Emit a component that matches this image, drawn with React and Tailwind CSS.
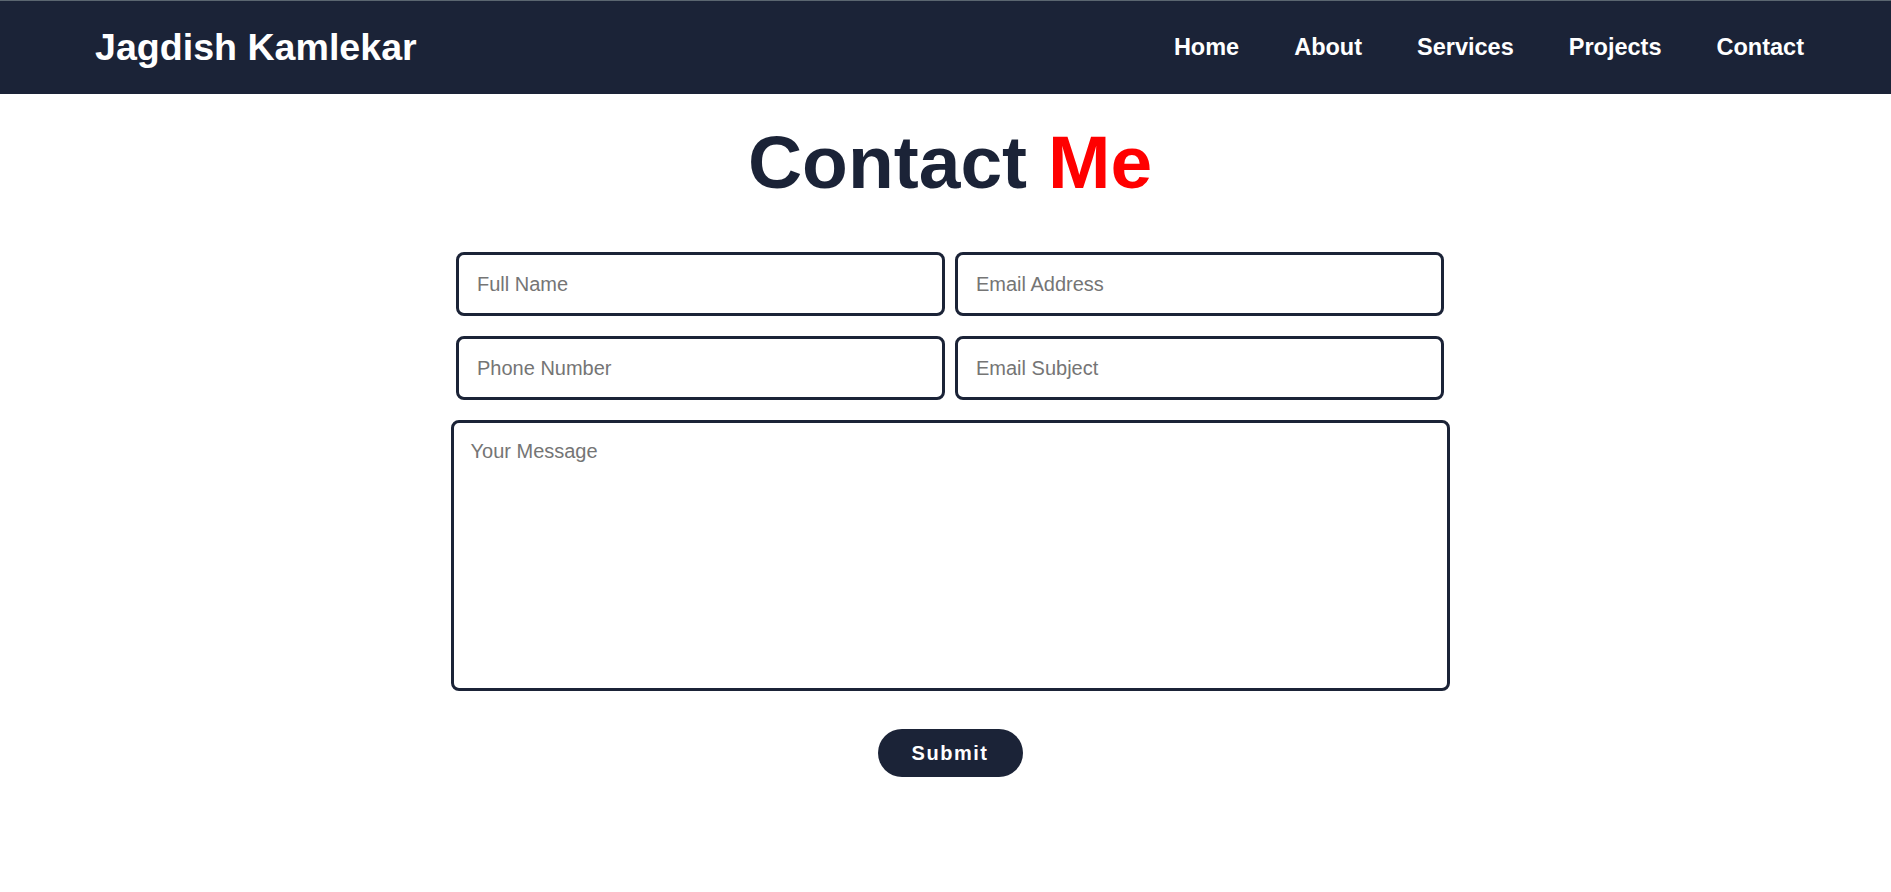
export default function App() {
  const links = ['Home', 'About', 'Services', 'Projects', 'Contact']

  return (
    <div className="min-h-screen bg-white font-['Liberation_Sans',Arial,sans-serif]">
      {/* Navbar */}
      <header className="h-[94px] border-t border-[#5b6670] bg-[#1b2337] flex items-center justify-between pl-[95px] pr-[87px]">
        <a href="#" className="text-[37.6px] font-bold text-white">
          Jagdish Kamlekar
        </a>
        <nav className="flex items-center gap-[55px]">
          {links.map((link) => (
            <a key={link} href="#" className="text-[23.5px] font-bold text-white">
              {link}
            </a>
          ))}
        </nav>
      </header>

      {/* Contact */}
      <section className="flex flex-col items-center pl-[9px]">
        <h1 className="mt-[25px] text-[75px] leading-[86px] font-bold text-[#1b2337]">
          Contact <span className="text-[#ff0000]">Me</span>
        </h1>

        <form className="mt-[47px] flex flex-col items-center gap-[20px]" onSubmit={(e) => e.preventDefault()}>
          <div className="flex gap-[10px]">
            <input
              type="text"
              placeholder="Full Name"
              className="w-[489px] h-[64px] border-[3px] border-[#1b2337] rounded-[8px] px-[18px] text-[20px] placeholder:text-[#757575] outline-none"
            />
            <input
              type="email"
              placeholder="Email Address"
              className="w-[489px] h-[64px] border-[3px] border-[#1b2337] rounded-[8px] px-[18px] text-[20px] placeholder:text-[#757575] outline-none"
            />
          </div>
          <div className="flex gap-[10px]">
            <input
              type="text"
              placeholder="Phone Number"
              className="w-[489px] h-[64px] border-[3px] border-[#1b2337] rounded-[8px] px-[18px] text-[20px] placeholder:text-[#757575] outline-none"
            />
            <input
              type="text"
              placeholder="Email Subject"
              className="w-[489px] h-[64px] border-[3px] border-[#1b2337] rounded-[8px] px-[18px] text-[20px] placeholder:text-[#757575] outline-none"
            />
          </div>
          <textarea
            placeholder="Your Message"
            className="w-[999px] h-[271px] border-[3px] border-[#1b2337] rounded-[8px] p-[17px] text-[20px] leading-[23px] placeholder:text-[#757575] outline-none resize-none"
          ></textarea>

          <button
            type="submit"
            className="mt-[18px] h-[48px] w-[145px] rounded-full bg-[#1b2337] text-white text-[20px] font-bold tracking-[1.5px] flex items-center justify-center"
          >
            Submit
          </button>
        </form>
      </section>
    </div>
  )
}
